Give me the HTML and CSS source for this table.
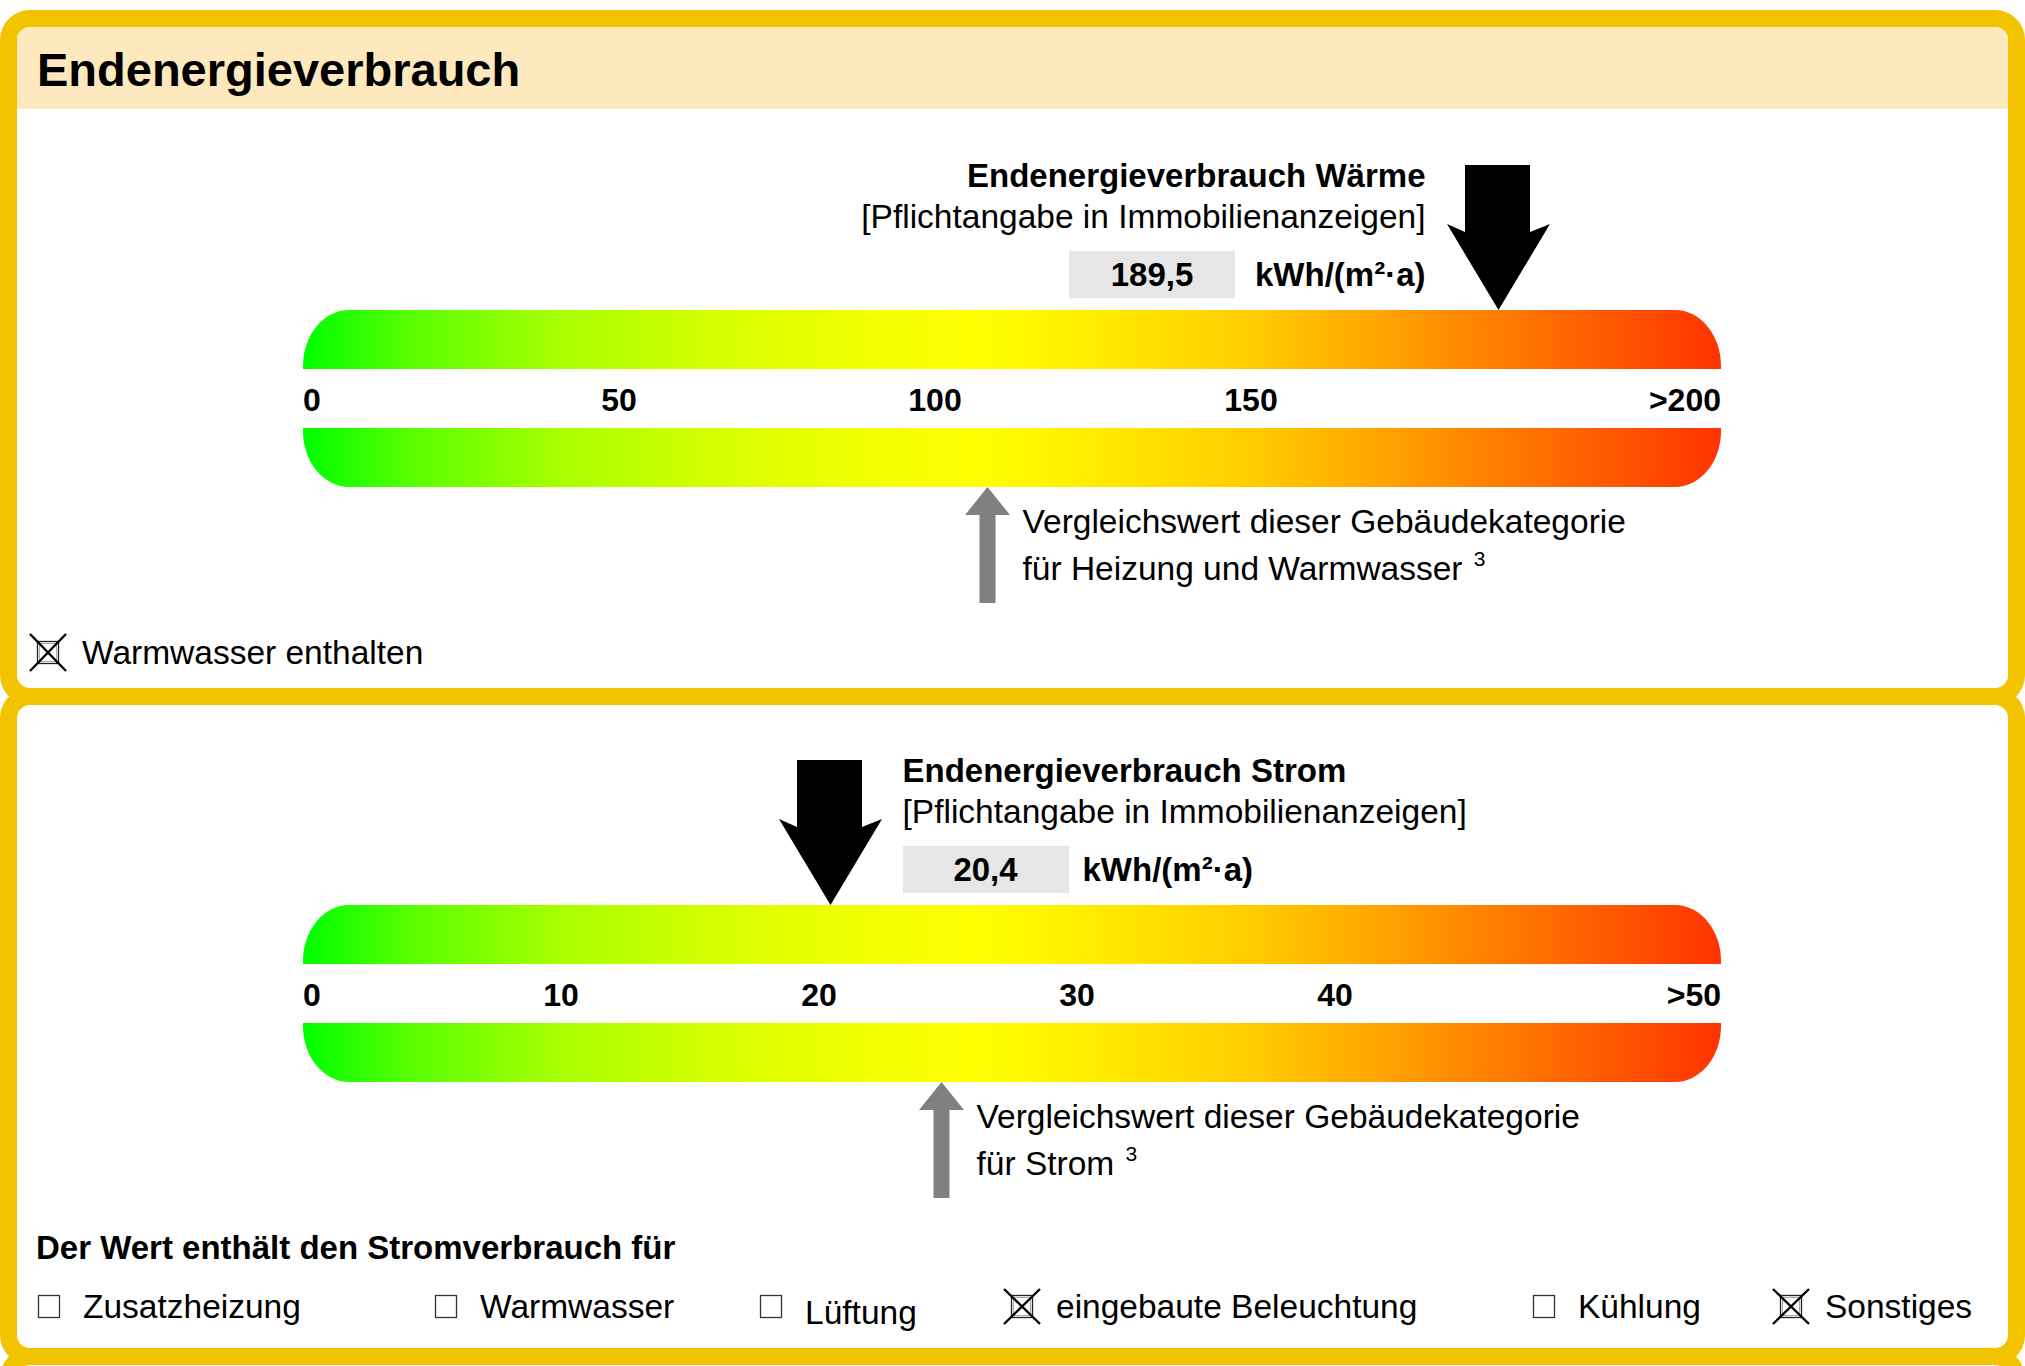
FILE: index.html
```html
<!DOCTYPE html>
<html lang="de">
<head>
<meta charset="utf-8">
<title>Endenergieverbrauch</title>
<link rel="stylesheet" href="styles.css">
</head>
<body>
<div class="sheet">
  <section class="panel">
    <header class="panel-head"><h1>Endenergieverbrauch</h1></header>
    <div class="panel-body body-heat">
      <div class="gauge" style="--pos:1195px; --cmp:684px">
        <div class="gauge-head head-heat">
          <div class="info info-right">
            <div class="info-title">Endenergieverbrauch Wärme</div>
            <div class="info-sub">[Pflichtangabe in Immobilienanzeigen]</div>
            <div class="info-value gap-wide"><span class="value-box">189,5</span><span class="unit">kWh/(m²·a)</span></div>
          </div>
          <svg class="arrow-down" width="103" height="145" viewBox="0 0 103 145"><polygon points="18,0 83,0 83,67 103,59 51.5,145 0,59 18,67" fill="#000"/></svg>
        </div>
        <div class="bar bar-top"></div>
        <div class="scale scale-heat"><span>0</span><span>50</span><span>100</span><span>150</span><span>&gt;200</span></div>
        <div class="bar bar-bottom"></div>
        <div class="compare">
          <svg class="arrow-up" width="45" height="116" viewBox="0 0 45 116"><polygon points="22.5,0 45,28 30.5,28 30.5,116 14.5,116 14.5,28 0,28" fill="#808080"/></svg>
          <div class="compare-text">Vergleichswert dieser Gebäudekategorie<br>für Heizung und Warmwasser <sup>3</sup></div>
        </div>
      </div>
      <div class="check-row">
        <svg class="cb" width="38" height="39" viewBox="0 0 38 39"><rect x="8.5" y="8.5" width="21" height="22" fill="none" stroke="#222" stroke-width="1.3"/><rect x="10.5" y="10.5" width="17" height="18" fill="none" stroke="#aaa" stroke-width="1"/><path d="M1 1 L37 38 M37 1 L1 38" stroke="#000" stroke-width="2.4"/></svg>
        <span class="opt-label">Warmwasser enthalten</span>
      </div>
    </div>
  </section>

  <section class="panel">
    <div class="panel-body body-power">
      <div class="gauge" style="--pos:527px; --cmp:638px">
        <div class="gauge-head head-power">
          <svg class="arrow-down" width="103" height="145" viewBox="0 0 103 145"><polygon points="18,0 83,0 83,67 103,59 51.5,145 0,59 18,67" fill="#000"/></svg>
          <div class="info info-left">
            <div class="info-title">Endenergieverbrauch Strom</div>
            <div class="info-sub">[Pflichtangabe in Immobilienanzeigen]</div>
            <div class="info-value gap-narrow"><span class="value-box">20,4</span><span class="unit">kWh/(m²·a)</span></div>
          </div>
        </div>
        <div class="bar bar-top"></div>
        <div class="scale scale-power"><span>0</span><span>10</span><span>20</span><span>30</span><span>40</span><span>&gt;50</span></div>
        <div class="bar bar-bottom"></div>
        <div class="compare">
          <svg class="arrow-up" width="45" height="116" viewBox="0 0 45 116"><polygon points="22.5,0 45,28 30.5,28 30.5,116 14.5,116 14.5,28 0,28" fill="#808080"/></svg>
          <div class="compare-text">Vergleichswert dieser Gebäudekategorie<br>für Strom <sup>3</sup></div>
        </div>
      </div>
      <div class="note">Der Wert enthält den Stromverbrauch für</div>
      <div class="options">
        <div class="opt">
          <svg class="cb" width="38" height="37" viewBox="0 0 38 37"><rect x="8.5" y="7.5" width="21" height="22" fill="none" stroke="#333" stroke-width="1.3"/></svg>
          <span class="opt-label">Zusatzheizung</span>
        </div>
        <div class="opt">
          <svg class="cb" width="38" height="37" viewBox="0 0 38 37"><rect x="8.5" y="7.5" width="21" height="22" fill="none" stroke="#333" stroke-width="1.3"/></svg>
          <span class="opt-label">Warmwasser</span>
        </div>
        <div class="opt">
          <svg class="cb" width="38" height="37" viewBox="0 0 38 37"><rect x="8.5" y="7.5" width="21" height="22" fill="none" stroke="#333" stroke-width="1.3"/></svg>
          <span class="opt-label opt-low">Lüftung</span>
        </div>
        <div class="opt">
          <svg class="cb" width="38" height="37" viewBox="0 0 38 37"><rect x="8.5" y="7.5" width="21" height="22" fill="none" stroke="#222" stroke-width="1.3"/><rect x="10.5" y="9.5" width="17" height="18" fill="none" stroke="#aaa" stroke-width="1"/><path d="M1 1 L37 36 M37 1 L1 36" stroke="#000" stroke-width="2.4"/></svg>
          <span class="opt-label">eingebaute Beleuchtung</span>
        </div>
        <div class="opt">
          <svg class="cb" width="38" height="37" viewBox="0 0 38 37"><rect x="8.5" y="7.5" width="21" height="22" fill="none" stroke="#333" stroke-width="1.3"/></svg>
          <span class="opt-label">Kühlung</span>
        </div>
        <div class="opt">
          <svg class="cb" width="38" height="37" viewBox="0 0 38 37"><rect x="8.5" y="7.5" width="21" height="22" fill="none" stroke="#222" stroke-width="1.3"/><rect x="10.5" y="9.5" width="17" height="18" fill="none" stroke="#aaa" stroke-width="1"/><path d="M1 1 L37 36 M37 1 L1 36" stroke="#000" stroke-width="2.4"/></svg>
          <span class="opt-label">Sonstiges</span>
        </div>
      </div>
    </div>
  </section>

  <section class="panel panel-end"></section>
</div>
</body>
</html>
```

FILE: styles.css
```css
html, body {
  margin: 0;
  padding: 0;
  background: #fff;
  overflow: hidden;
}

body {
  font-family: "Liberation Sans", Arial, Helvetica, sans-serif;
  color: #000;
}

.sheet {
  box-sizing: border-box;
  height: 1366px;
  overflow: hidden;
  padding-top: 10px;
}

.panel {
  border: 17px solid #f3c300;
  border-radius: 30px;
  background: #fff;
  overflow: hidden;
}

.panel + .panel {
  margin-top: -17px;
}

.panel-end {
  height: 40px;
}

.panel-head {
  background: #fde9bd;
  height: 82px;
  padding-left: 20px;
  box-sizing: border-box;
}

.panel-head h1 {
  margin: 0;
  padding-top: 4px;
  font-size: 47px;
  line-height: 78px;
  font-weight: bold;
}

.body-heat {
  padding: 46px 0 16px 0;
}

.body-power {
  padding: 45px 0 23px 0;
}

.gauge {
  width: 1418px;
  margin-left: 286px;
}

.gauge-head {
  display: flex;
  align-items: flex-end;
  gap: 21px;
}

.head-heat {
  justify-content: flex-end;
  padding-right: calc(1418px - var(--pos) - 51.5px);
}

.head-power {
  justify-content: flex-start;
  padding-left: calc(var(--pos) - 51.5px);
}

.arrow-down {
  display: block;
  flex: none;
}

.info {
  display: flex;
  flex-direction: column;
  margin-bottom: 12px;
  white-space: nowrap;
}

.info-right {
  align-items: flex-end;
}

.info-left {
  align-items: flex-start;
}

.info-title {
  font-weight: bold;
  font-size: 33px;
  line-height: 41px;
}

.info-sub {
  font-size: 33.5px;
  line-height: 41px;
}

.info-value {
  display: flex;
  align-items: center;
  margin-top: 14px;
}

.gap-wide {
  gap: 20px;
}

.gap-narrow {
  gap: 14px;
}

.value-box {
  width: 166px;
  height: 47px;
  background: #e6e6e6;
  font-weight: bold;
  font-size: 33px;
  line-height: 47px;
  text-align: center;
}

.unit {
  font-weight: bold;
  font-size: 33px;
  line-height: 47px;
}

.bar {
  height: 59px;
  background: linear-gradient(to right,
    #00ff00 0%,
    #5cff00 8%,
    #a8ff00 18%,
    #dcff00 31%,
    #f4ff00 41%,
    #ffff00 47%,
    #fff600 52%,
    #ffe800 57%,
    #ffcc00 67%,
    #ffa000 77%,
    #ff7000 87%,
    #ff3300 100%);
}

.bar-top {
  border-radius: 46px 46px 0 0 / 56px 56px 0 0;
}

.bar-bottom {
  border-radius: 0 0 46px 46px / 0 0 56px 56px;
}

.scale {
  display: grid;
  height: 59px;
  box-sizing: border-box;
  padding-top: 3px;
  font-weight: bold;
  font-size: 32px;
  line-height: 56px;
}

.scale span {
  text-align: center;
}

.scale span:first-child {
  text-align: left;
}

.scale span:last-child {
  text-align: right;
}

.scale-heat {
  grid-template-columns: 158px 316px 316px 316px 1fr;
}

.scale-power {
  grid-template-columns: 129px 258px 258px 258px 258px 1fr;
}

.compare {
  display: flex;
  align-items: flex-start;
  gap: 13px;
  height: 116px;
  padding-left: calc(var(--cmp) - 22.5px);
}

.arrow-up {
  display: block;
  flex: none;
}

.compare-text {
  padding-top: 11px;
  font-size: 33.5px;
  line-height: 47px;
  white-space: nowrap;
}

.compare-text sup {
  font-size: 21px;
  line-height: 0;
  vertical-align: 14px;
  margin-left: 2px;
}

.check-row {
  display: flex;
  align-items: center;
  gap: 15px;
  height: 39px;
  margin-top: 30px;
  padding-left: 12px;
}

.cb {
  display: block;
  flex: none;
}

.opt-label {
  font-size: 33.5px;
  line-height: 37px;
  white-space: nowrap;
}

.note {
  margin: 29px 0 0 19px;
  font-weight: bold;
  font-size: 33px;
  line-height: 41px;
}

.options {
  display: grid;
  grid-template-columns: 397px 325px 251px 522px 247px auto;
  margin-top: 20px;
  padding-left: 13px;
}

.opt {
  display: flex;
  align-items: center;
  gap: 15px;
  height: 37px;
}

.opt-low {
  margin-top: 12px;
}
```
